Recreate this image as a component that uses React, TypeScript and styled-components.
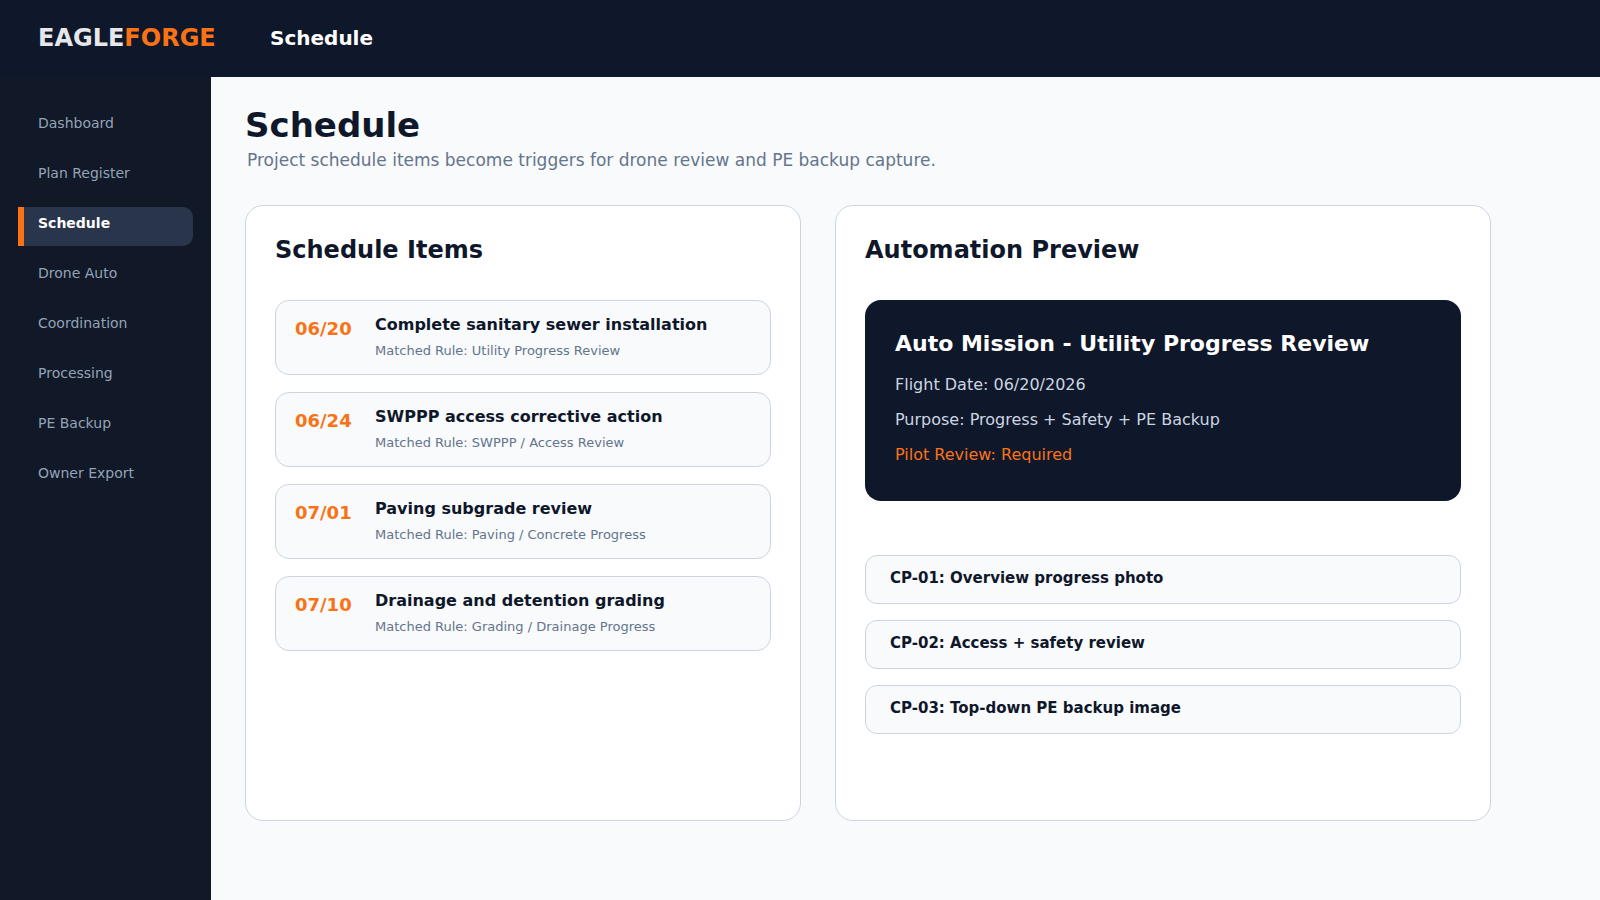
import React from "react";
import styled, { createGlobalStyle } from "styled-components";

const color = {
  navy: "#0f172a",
  side: "#111827",
  active: "#28354b",
  page: "#f8fafc",
  line: "#cbd5e1",
  muted: "#64748b",
  nav: "#94a3b8",
  orange: "#f97316",
};

const GlobalStyle = createGlobalStyle`
  *, *::before, *::after { box-sizing: border-box; }
  body {
    margin: 0;
    background: ${color.page};
    color: ${color.navy};
    font-family: "DejaVu Sans", Verdana, sans-serif;
  }
  h1, h2, h3, p, ul, ol { margin: 0; padding: 0; }
  ul, ol { list-style: none; }
`;

const Shell = styled.div`
  display: flex;
  flex-direction: column;
  min-height: 100vh;
`;

const Header = styled.header`
  display: flex;
  align-items: center;
  height: 77px;
  padding: 0 38px 2px;
  background: ${color.navy};
`;

const Logo = styled.a`
  width: 232px;
  font-size: 24px;
  line-height: 28px;
  font-weight: 700;
  color: #e5e7eb;
  text-decoration: none;
`;

const LogoAccent = styled.span`
  color: ${color.orange};
`;

const HeaderTitle = styled.p`
  font-size: 20px;
  line-height: 28px;
  font-weight: 700;
  color: #ffffff;
`;

const Body = styled.div`
  display: flex;
  flex: 1;
`;

const Sidebar = styled.nav`
  flex: none;
  width: 211px;
  padding: 30px 18px;
  background: ${color.side};
`;

const NavList = styled.ul`
  display: flex;
  flex-direction: column;
  gap: 11px;
`;

const NavLink = styled.a<{ $active?: boolean }>`
  display: block;
  padding: 8px 14px 15px;
  border-left: 6px solid ${(p) => (p.$active ? color.orange : "transparent")};
  border-radius: 0 10px 10px 0;
  background: ${(p) => (p.$active ? color.active : "transparent")};
  background-clip: padding-box;
  color: ${(p) => (p.$active ? "#ffffff" : color.nav)};
  font-size: 14px;
  line-height: 16px;
  font-weight: ${(p) => (p.$active ? 700 : 400)};
  text-decoration: none;
`;

const Main = styled.main`
  flex: 1;
  min-width: 0;
  padding: 28px 109px 40px 34px;
`;

const PageTitle = styled.h1`
  font-size: 34px;
  line-height: 40px;
  font-weight: 700;
`;

const Lead = styled.p`
  padding-left: 2px;
  margin-top: 5px;
  font-size: 17px;
  line-height: 20px;
  color: ${color.muted};
`;

const Panels = styled.div`
  display: grid;
  grid-template-columns: minmax(0, 556fr) minmax(0, 656fr);
  gap: 34px;
  margin-top: 35px;
`;

const Panel = styled.section`
  min-height: 616px;
  padding: 29px;
  border: 1px solid ${color.line};
  border-radius: 18px;
  background: #ffffff;
`;

const PanelTitle = styled.h2`
  margin-bottom: 35px;
  font-size: 24px;
  line-height: 30px;
  font-weight: 700;
`;

const ItemList = styled.ul`
  display: flex;
  flex-direction: column;
  gap: 17px;
`;

const Item = styled.li`
  display: flex;
  gap: 22px;
  padding: 13px 19px 14px;
  border: 1px solid ${color.line};
  border-radius: 14px;
  background: ${color.page};
`;

const ItemDate = styled.time`
  flex: none;
  width: 58px;
  padding-top: 4px;
  font-size: 18px;
  line-height: 22px;
  font-weight: 700;
  color: ${color.orange};
`;

const ItemTitle = styled.h3`
  font-size: 16px;
  line-height: 22px;
  font-weight: 700;
`;

const ItemRule = styled.p`
  margin-top: 6px;
  font-size: 13px;
  line-height: 18px;
  color: ${color.muted};
`;

const Mission = styled.article`
  padding: 30px 30px 29px;
  border-radius: 16px;
  background: ${color.navy};
`;

const MissionTitle = styled.h3`
  margin-bottom: 9px;
  font-size: 22px;
  line-height: 28px;
  font-weight: 700;
  color: #ffffff;
`;

const MissionLine = styled.p<{ $alert?: boolean }>`
  font-size: 16px;
  line-height: 35px;
  color: ${(p) => (p.$alert ? color.orange : color.line)};
`;

const Checkpoints = styled.ol`
  display: flex;
  flex-direction: column;
  gap: 16px;
  margin-top: 54px;
`;

const Checkpoint = styled.li`
  padding: 12px 24px 15px;
  border: 1px solid ${color.line};
  border-radius: 12px;
  background: ${color.page};
  font-size: 15px;
  line-height: 20px;
  font-weight: 700;
`;

const navItems = [
  "Dashboard",
  "Plan Register",
  "Schedule",
  "Drone Auto",
  "Coordination",
  "Processing",
  "PE Backup",
  "Owner Export",
];

const scheduleItems = [
  { date: "06/20", title: "Complete sanitary sewer installation", rule: "Utility Progress Review" },
  { date: "06/24", title: "SWPPP access corrective action", rule: "SWPPP / Access Review" },
  { date: "07/01", title: "Paving subgrade review", rule: "Paving / Concrete Progress" },
  { date: "07/10", title: "Drainage and detention grading", rule: "Grading / Drainage Progress" },
];

const checkpoints = [
  "CP-01: Overview progress photo",
  "CP-02: Access + safety review",
  "CP-03: Top-down PE backup image",
];

export default function App() {
  return (
    <Shell>
      <GlobalStyle />
      <Header>
        <Logo href="#">
          EAGLE<LogoAccent>FORGE</LogoAccent>
        </Logo>
        <HeaderTitle>Schedule</HeaderTitle>
      </Header>
      <Body>
        <Sidebar>
          <NavList>
            {navItems.map((label) => (
              <li key={label}>
                <NavLink
                  href="#"
                  $active={label === "Schedule"}
                  aria-current={label === "Schedule" ? "page" : undefined}
                >
                  {label}
                </NavLink>
              </li>
            ))}
          </NavList>
        </Sidebar>
        <Main>
          <PageTitle>Schedule</PageTitle>
          <Lead>Project schedule items become triggers for drone review and PE backup capture.</Lead>
          <Panels>
            <Panel>
              <PanelTitle>Schedule Items</PanelTitle>
              <ItemList>
                {scheduleItems.map((item) => (
                  <Item key={item.date}>
                    <ItemDate>{item.date}</ItemDate>
                    <div>
                      <ItemTitle>{item.title}</ItemTitle>
                      <ItemRule>{`Matched Rule: ${item.rule}`}</ItemRule>
                    </div>
                  </Item>
                ))}
              </ItemList>
            </Panel>
            <Panel>
              <PanelTitle>Automation Preview</PanelTitle>
              <Mission>
                <MissionTitle>Auto Mission - Utility Progress Review</MissionTitle>
                <MissionLine>Flight Date: 06/20/2026</MissionLine>
                <MissionLine>Purpose: Progress + Safety + PE Backup</MissionLine>
                <MissionLine $alert>Pilot Review: Required</MissionLine>
              </Mission>
              <Checkpoints>
                {checkpoints.map((label) => (
                  <Checkpoint key={label}>{label}</Checkpoint>
                ))}
              </Checkpoints>
            </Panel>
          </Panels>
        </Main>
      </Body>
    </Shell>
  );
}
